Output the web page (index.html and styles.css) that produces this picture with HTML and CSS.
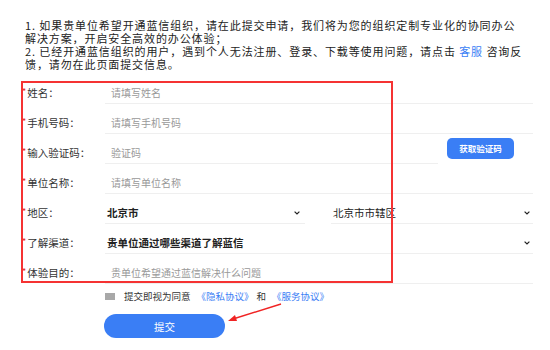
FILE: index.html
```html
<!DOCTYPE html>
<html lang="zh">
<head>
<meta charset="utf-8">
<link rel="stylesheet" href="styles.css">
</head>
<body>
<div class="page">
  <div class="intro">
    <p>1. 如果贵单位希望开通蓝信组织，请在此提交申请，我们将为您的组织定制专业化的协同办公解决方案，开启安全高效的办公体验；</p>
    <p>2. 已经开通蓝信组织的用户，遇到个人无法注册、登录、下载等使用问题，请点击 <a class="link">客服</a> 咨询反馈，请勿在此页面提交信息。</p>
  </div>
  <div class="form">
    <div class="row">
      <label class="label"><i>*</i>姓名：</label>
      <div class="field"><span class="ph">请填写姓名</span></div>
    </div>
    <div class="row">
      <label class="label"><i>*</i>手机号码：</label>
      <div class="field"><span class="ph">请填写手机号码</span></div>
    </div>
    <div class="row">
      <label class="label"><i>*</i>输入验证码：</label>
      <div class="field code"><span class="ph">验证码</span></div>
      <button class="code-btn">获取验证码</button>
    </div>
    <div class="row">
      <label class="label"><i>*</i>单位名称：</label>
      <div class="field"><span class="ph">请填写单位名称</span></div>
    </div>
    <div class="row">
      <label class="label"><i>*</i>地区：</label>
      <div class="field sel city"><span class="val">北京市</span><svg class="chev" width="6" height="4" viewBox="0 0 6 4"><polyline points="0.6,0.6 3,3 5.4,0.6" fill="none" stroke="#222" stroke-width="1.2"/></svg></div>
      <div class="field sel district"><span class="val">北京市市辖区</span><svg class="chev" width="6" height="4" viewBox="0 0 6 4"><polyline points="0.6,0.6 3,3 5.4,0.6" fill="none" stroke="#222" stroke-width="1.2"/></svg></div>
    </div>
    <div class="row">
      <label class="label"><i>*</i>了解渠道：</label>
      <div class="field sel"><span class="val">贵单位通过哪些渠道了解蓝信</span><svg class="chev" width="6" height="4" viewBox="0 0 6 4"><polyline points="0.6,0.6 3,3 5.4,0.6" fill="none" stroke="#222" stroke-width="1.2"/></svg></div>
    </div>
    <div class="row">
      <label class="label"><i>*</i>体验目的：</label>
      <div class="field"><span class="ph">贵单位希望通过蓝信解决什么问题</span></div>
    </div>
    <div class="redbox"></div>
  </div>
  <div class="agree">
    <span class="check"></span>
    <span>提交即视为同意</span>
    <a class="link">《隐私协议》</a>
    <span>和</span>
    <a class="link">《服务协议》</a>
  </div>
  <div class="submit-wrap">
    <button class="submit">提交</button>
    <svg class="arrow" width="60" height="24" viewBox="0 0 60 24">
      <line x1="56" y1="2" x2="8" y2="17" stroke="#f02424" stroke-width="1.4"/>
      <polygon points="3,19 10,13 12,19" fill="#f02424"/>
    </svg>
  </div>
</div>
</body>
</html>
```
FILE: styles.css
```css
* { box-sizing: border-box; }
html, body { margin: 0; padding: 0; background: #fff; }
body {
  font-family: "Noto Sans CJK SC", "Noto Sans", sans-serif;
  color: #333;
  width: 550px;
  height: 350px;
  overflow: hidden;
}
.page { position: relative; width: 550px; height: 350px; }
.intro {
  padding: 19px 0 0 25px;
  width: 525px;
  font-size: 11px;
  letter-spacing: 0.9px;
  line-height: 13px;
  color: #222;
}
.intro p { margin: 0; }
.link { color: #3a7ef5; }
.form {
  position: relative;
  margin-top: 2px;
  padding-left: 22px;
}
.row {
  display: flex;
  align-items: center;
  height: 30px;
  padding-top: 8px;
}
.label {
  width: 83px;
  flex: none;
  font-size: 10.5px;
  color: #333;
  line-height: 22px;
  align-self: stretch;
}
.label i {
  font-style: normal;
  color: #e02020;
  font-size: 9px;
  vertical-align: 2px;
  margin-right: 1px;
}
.field {
  width: 428px;
  align-self: stretch;
  display: flex;
  align-items: center;
  border-bottom: 1px solid #efefef;
  font-size: 10px;
  padding-left: 6px;
  position: relative;
  top: 1px;
}
.field.code { width: 333px; }
.ph { color: #999; }
.val { color: #222; font-weight: bold; font-size: 10.5px; }
.sel { justify-content: space-between; padding-left: 2px; padding-right: 3px; }
.city { width: 200px; padding-right: 5px; }
.district { width: 202px; margin-left: 26px; }
.district .val { font-weight: normal; }
.chev { flex: none; }
.code-btn {
  margin-left: 9px;
  width: 67px;
  height: 21px;
  border: none;
  border-radius: 5px;
  background: #3a7ef5;
  color: #fff;
  font-family: inherit;
  font-size: 8.5px;
  font-weight: bold;
  padding: 0;
  align-self: center;
  position: relative;
  top: -4px;
}
.redbox {
  position: absolute;
  left: 21px;
  top: 8px;
  width: 372px;
  height: 202px;
  border: 2px solid #f53232;
  pointer-events: none;
}
.agree {
  display: flex;
  align-items: center;
  margin-top: 6px;
  padding-left: 105px;
  font-size: 9.5px;
  color: #333;
  height: 14px;
}
.check {
  width: 10px;
  height: 7px;
  background: #a8a8a8;
  margin-right: 9px;
}
.agree .link { margin: 0 3px 0 4px; }
.agree span + .link { margin-left: 6px; }
.submit-wrap {
  position: relative;
  margin-top: 11px;
  padding-left: 104px;
}
.submit {
  width: 121px;
  height: 24px;
  border: none;
  border-radius: 12px;
  background: #3a7ef5;
  color: #fff;
  font-family: inherit;
  font-size: 10.5px;
  padding: 0;
  display: block;
}
.arrow {
  position: absolute;
  left: 225px;
  top: -12px;
}
```
